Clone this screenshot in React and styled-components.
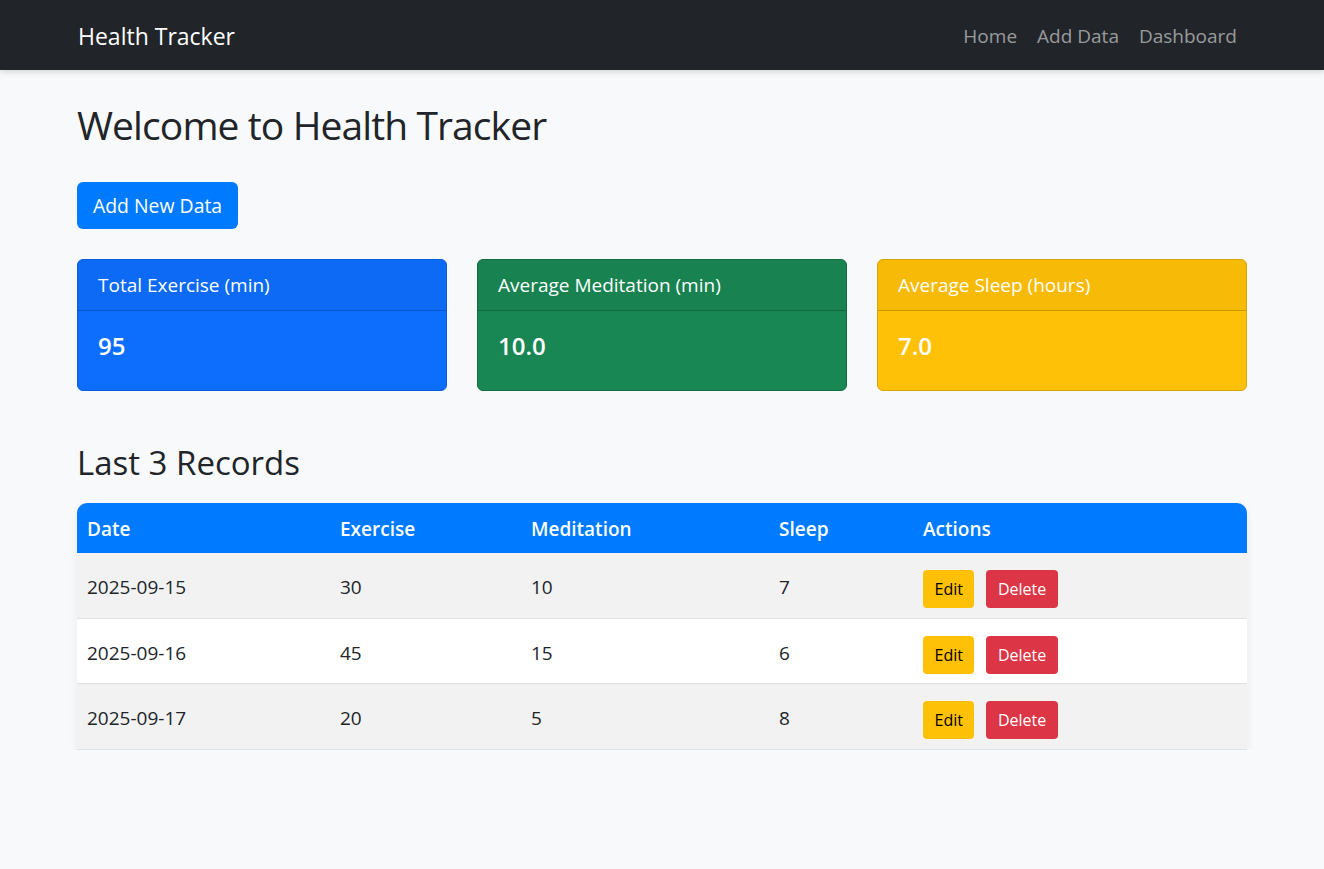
import React from 'react';
import styled, { createGlobalStyle } from 'styled-components';

const GlobalStyle = createGlobalStyle`
    * {
        box-sizing: border-box;
    }
    body {
        margin: 0;
        background: #f8f9fa;
        color: #212529;
        font-family: "Open Sans", "Noto Sans", sans-serif;
    }`
;

const NavBar = styled.nav`
    background: #212529;
    height: 70px;
    box-shadow: 0 2px 6px rgba(0, 0, 0, 0.15);`
;

const NavInner = styled.div`
    max-width: 1170px;
    height: 100%;
    margin: 0 auto;
    padding-top: 2px;
    display: flex;
    align-items: center;
    justify-content: space-between;`
;

const Brand = styled.a`
    color: #fff;
    font-size: 23px;
    padding-left: 1px;
    text-decoration: none;`
;

const NavLinks = styled.div`
    display: flex;
    align-items: center;`
;

const NavLink = styled.a`
    color: rgba(255, 255, 255, 0.55);
    font-size: 19px;
    padding: 0 10px;
    text-decoration: none;`
;

const Main = styled.main`
    max-width: 1170px;
    margin: 0 auto;
    padding-top: 31px;`
;

const Title = styled.h1`
    font-size: 39px;
    font-weight: 500;
    letter-spacing: -0.9px;
    line-height: 48px;
    margin: 0 0 33px;`
;

const PrimaryButton = styled.button`
    background: #007bff;
    color: #fff;
    border: none;
    border-radius: 6px;
    font-family: inherit;
    font-size: 19.4px;
    height: 47px;
    padding: 0 16px;`
;

const CardRow = styled.div`
    display: grid;
    grid-template-columns: repeat(3, 1fr);
    gap: 30px;
    margin-top: 30px;`
;

const cardColors = {
    blue: { bg: '#0d6efd', border: '#0b5ed7' },
    green: { bg: '#198754', border: '#146c43' },
    yellow: { bg: '#ffc107', border: '#d9a406' },
};

const Card = styled.div`
    background: ${p => cardColors[p.$tone].bg};
    border: 1px solid ${p => cardColors[p.$tone].border};
    border-radius: 6px;
    color: #fff;
    overflow: hidden;`
;

const CardHeader = styled.div`
    background: rgba(0, 0, 0, 0.03);
    border-bottom: 1px solid rgba(0, 0, 0, 0.175);
    font-size: 19px;
    line-height: 30px;
    padding: 10px 20px;`
;

const CardBody = styled.div`
    padding: 16px 20px 26px;`
;

const CardValue = styled.h5`
    margin: 0;
    font-size: 24px;
    font-weight: 600;
    line-height: 37px;`
;

const SectionTitle = styled.h2`
    font-size: 33px;
    font-weight: 500;
    line-height: 40px;
    margin: 52px 0 20px;`
;

const TableWrap = styled.div`
    border-radius: 10px 10px 0 0;
    overflow: hidden;
    box-shadow: 0 4px 10px rgba(0, 0, 0, 0.06);`
;

const Table = styled.table`
    width: 100%;
    border-collapse: collapse;
    font-size: 19px;
    table-layout: fixed;`
;

const HeadCell = styled.th`
    background: #007bff;
    color: #fff;
    font-weight: 600;
    text-align: left;
    line-height: 28px;
    padding: 12px 10px 10px;
    width: ${p => p.$w}px;`
;

const Row = styled.tr`
    background: ${p => (p.$striped ? '#f2f2f2' : '#fff')};
    border-bottom: 1px solid #dee2e6;`
;

const Cell = styled.td`
    padding: 13px 10px 9.67px;
    line-height: 28px;
    vertical-align: middle;`
;

const Actions = styled.div`
    display: flex;
    gap: 12px;
    padding-top: 4px;`
;

const ActionButton = styled.button`
    background: ${p => (p.$danger ? '#dc3545' : '#ffc107')};
    color: ${p => (p.$danger ? '#fff' : '#000')};
    border: none;
    border-radius: 4px;
    font-family: inherit;
    font-size: 16px;
    height: 38px;
    padding: 0 11.5px;`
;

const stats = [
    { label: 'Total Exercise (min)', value: '95', tone: 'blue' },
    { label: 'Average Meditation (min)', value: '10.0', tone: 'green' },
    { label: 'Average Sleep (hours)', value: '7.0', tone: 'yellow' },
];

const columns = [
    { name: 'Date', w: 253 },
    { name: 'Exercise', w: 191 },
    { name: 'Meditation', w: 248 },
    { name: 'Sleep', w: 144 },
    { name: 'Actions', w: 334 },
];

const records = [
    { date: '2025-09-15', exercise: 30, meditation: 10, sleep: 7 },
    { date: '2025-09-16', exercise: 45, meditation: 15, sleep: 6 },
    { date: '2025-09-17', exercise: 20, meditation: 5, sleep: 8 },
];

const App = () => {
    return (
        <>
            <GlobalStyle />
            <NavBar>
                <NavInner>
                    <Brand href="#">Health Tracker</Brand>
                    <NavLinks>
                        <NavLink href="#">Home</NavLink>
                        <NavLink href="#">Add Data</NavLink>
                        <NavLink href="#">Dashboard</NavLink>
                    </NavLinks>
                </NavInner>
            </NavBar>
            <Main>
                <Title>Welcome to Health Tracker</Title>
                <PrimaryButton>Add New Data</PrimaryButton>
                <CardRow>
                    {stats.map(s => (
                        <Card key={s.label} $tone={s.tone}>
                            <CardHeader>{s.label}</CardHeader>
                            <CardBody>
                                <CardValue>{s.value}</CardValue>
                            </CardBody>
                        </Card>
                    ))}
                </CardRow>
                <SectionTitle>Last 3 Records</SectionTitle>
                <TableWrap>
                    <Table>
                        <thead>
                            <tr>
                                {columns.map(c => (
                                    <HeadCell key={c.name} $w={c.w}>{c.name}</HeadCell>
                                ))}
                            </tr>
                        </thead>
                        <tbody>
                            {records.map((r, i) => (
                                <Row key={r.date} $striped={i % 2 === 0}>
                                    <Cell>{r.date}</Cell>
                                    <Cell>{r.exercise}</Cell>
                                    <Cell>{r.meditation}</Cell>
                                    <Cell>{r.sleep}</Cell>
                                    <Cell>
                                        <Actions>
                                            <ActionButton>Edit</ActionButton>
                                            <ActionButton $danger>Delete</ActionButton>
                                        </Actions>
                                    </Cell>
                                </Row>
                            ))}
                        </tbody>
                    </Table>
                </TableWrap>
            </Main>
        </>
    );
}

export default App;
